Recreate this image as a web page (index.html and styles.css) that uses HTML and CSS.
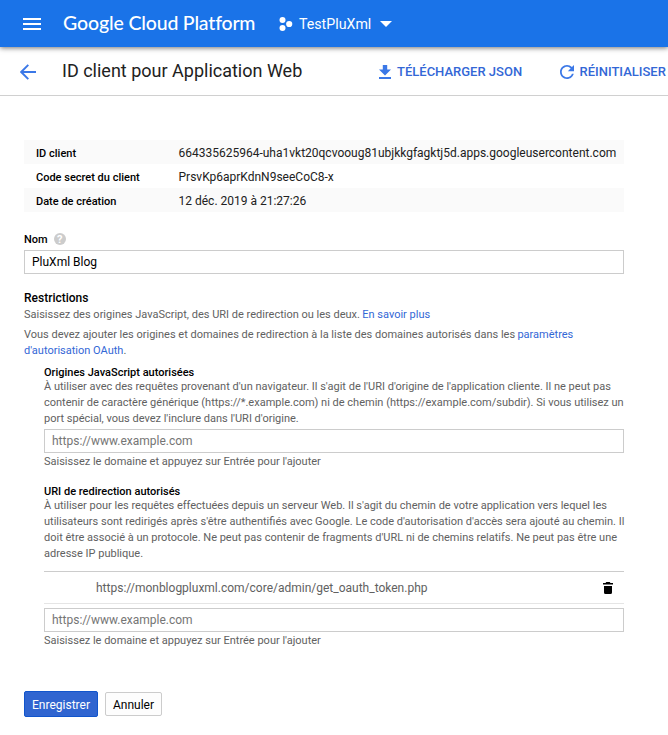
FILE: index.html
```html
<!DOCTYPE html>
<html lang="fr">
<head>
<meta charset="utf-8">
<title>ID client pour Application Web</title>
<link rel="stylesheet" href="styles.css">
</head>
<body>
<header class="topbar">
  <svg class="menu" width="18" height="12" viewBox="0 0 18 12"><path d="M0 0h18v2H0zM0 5h18v2H0zM0 10h18v2H0z" fill="#fff"/></svg>
  <span class="brand"><span class="brand-name">Google</span> Cloud Platform</span>
  <svg class="project-icon" width="14" height="14" viewBox="0 0 14 14" fill="#fff"><circle cx="3.5" cy="3" r="3"/><circle cx="3.5" cy="11" r="3"/><circle cx="10.2" cy="7" r="3.1"/></svg>
  <span class="project">TestPluXml</span>
  <svg class="caret" width="12" height="6" viewBox="0 0 12 6"><path d="M0 0h12L6 6z" fill="#fff"/></svg>
</header>
<div class="toolbar">
  <svg class="back" width="16" height="16" viewBox="0 0 16 16"><path d="M16 8H1.5M8.3 .8L1.2 8l7.1 7.2" fill="none" stroke="#3b78e7" stroke-width="1.9"/></svg>
  <h1 class="title">ID client pour Application Web</h1>
  <a class="action download"><svg width="12" height="14" viewBox="0 0 12 14" fill="#3b78e7"><path d="M3.8 0h4.4v4.6H12L6 10.4 0 4.6h3.8zM0 12h12v2H0z"/></svg>TÉLÉCHARGER JSON</a>
  <a class="action reset"><svg width="14" height="14" viewBox="4 4 16 16" fill="#3b78e7"><path d="M17.65 6.35C16.2 4.9 14.21 4 12 4c-4.42 0-7.99 3.58-7.99 8s3.57 8 7.99 8c3.73 0 6.84-2.55 7.73-6h-2.08c-.82 2.33-3.04 4-5.65 4-3.31 0-6-2.69-6-6s2.69-6 6-6c1.66 0 3.14.69 4.22 1.78L13 11h7V4z"/></svg>RÉINITIALISER</a>
</div>
<main class="content">
  <dl class="details">
    <div class="row"><dt>ID client</dt><dd>664335625964-uha1vkt20qcvooug81ubjkkgfagktj5d.apps.googleusercontent.com</dd></div>
    <div class="row"><dt>Code secret du client</dt><dd>PrsvKp6aprKdnN9seeCoC8-x</dd></div>
    <div class="row"><dt>Date de création</dt><dd>12 déc. 2019 à 21:27:26</dd></div>
  </dl>
  <label class="label" for="name">Nom <span class="help">?</span></label>
  <input id="name" class="field" type="text" value="PluXml Blog">
  <h2 class="section">Restrictions</h2>
  <p class="text">Saisissez des origines JavaScript, des URI de redirection ou les deux. <a>En savoir plus</a></p>
  <p class="text domains">Vous devez ajouter les origines et domaines de redirection à la liste des domaines autorisés dans les <a>paramètres<br>d'autorisation OAuth</a>.</p>
  <section class="group origins">
    <h3>Origines JavaScript autorisées</h3>
    <p class="text">À utiliser avec des requêtes provenant d'un navigateur. Il s'agit de l'URI d'origine de l'application cliente. Il ne peut pas<br>contenir de caractère générique (https://*.example.com) ni de chemin (https://example.com/subdir). Si vous utilisez un<br>port spécial, vous devez l'inclure dans l'URI d'origine.</p>
    <input class="field" type="text" placeholder="https://www.example.com">
    <p class="text">Saisissez le domaine et appuyez sur Entrée pour l'ajouter</p>
  </section>
  <section class="group redirects">
    <h3>URI de redirection autorisés</h3>
    <p class="text">À utiliser pour les requêtes effectuées depuis un serveur Web. Il s'agit du chemin de votre application vers lequel les<br>utilisateurs sont redirigés après s'être authentifiés avec Google. Le code d'autorisation d'accès sera ajouté au chemin. Il<br>doit être associé à un protocole. Ne peut pas contenir de fragments d'URL ni de chemins relatifs. Ne peut pas être une<br>adresse IP publique.</p>
    <div class="uri"><span>https://monblogpluxml.com/core/admin/get_oauth_token.php</span>
      <svg width="10" height="12" viewBox="0 0 10 12"><path d="M0 1h2.5l.8-1h3.4l.8 1H10v1.500H0zM1 4h8v6.500Q9 12 7.500 12h-5Q1 12 1 10.500z"/></svg>
    </div>
    <input class="field" type="text" placeholder="https://www.example.com">
    <p class="text">Saisissez le domaine et appuyez sur Entrée pour l'ajouter</p>
  </section>
  <div class="buttons">
    <button class="save">Enregistrer</button>
    <button class="cancel">Annuler</button>
  </div>
</main>
</body>
</html>
```
FILE: styles.css
```css
* { box-sizing: border-box; }
body {
  margin: 0;
  height: 735px;
  overflow: hidden;
  background: #fff;
  color: #000;
  font: 12px/16px Roboto, sans-serif;
}
h1, h2, h3, p, dl, dd { margin: 0; }
svg { display: block; flex: none; }
.topbar {
  display: flex;
  align-items: center;
  position: relative;
  height: 47px;
  padding-left: 23px;
  background: #1a73e8;
  color: #fff;
  box-shadow: 0 1px 5px rgba(0, 0, 0, .55);
}
.menu { margin-right: 22px; }
.brand {
  width: 216px;
  padding-bottom: 2px;
  font: 500 19.5px/24px Lato, sans-serif;
  letter-spacing: -.2px;
  white-space: nowrap;
}
.brand-name { letter-spacing: -.1px; }
.project { margin-left: 6px; width: 81px; padding-top: 1px; font-size: 14.2px; }
.toolbar {
  display: flex;
  align-items: center;
  height: 49px;
  padding-left: 20px;
  border-bottom: 1px solid #d0d0d0;
  white-space: nowrap;
}
.back { margin: 1px 26px 0 0; }
.title {
  width: 317px;
  flex: none;
  color: #212121;
  font-size: 18px;
  font-weight: 400;
  line-height: 24px;
}
.action {
  display: flex;
  align-items: center;
  flex: none;
  margin-top: 2px;
  color: #3367d6;
  font-size: 13px;
  font-weight: 500;
}
.download { width: 181px; gap: 6px; }
.reset { gap: 5.5px; }
.content { padding: 44px 0 0 24px; width: 624px; }
.row { display: flex; height: 24px; line-height: 26px; padding-left: 12px; }
.row:nth-child(odd) { background: #fafafa; }
.row dt { width: 142.5px; padding-top: 1px; font-size: 11px; font-weight: 500; }
.row dd { color: #212121; white-space: nowrap; }
.label {
  display: flex;
  align-items: center;
  gap: 6px;
  margin: 20px 0 2px;
  font-size: 11px;
  font-weight: 500;
}
.help {
  width: 12px;
  height: 12px;
  margin-top: -2px;
  border-radius: 50%;
  background: #ccc;
  color: #fff;
  font-size: 11px;
  font-weight: 700;
  line-height: 13px;
  text-align: center;
}
.field {
  display: block;
  width: 100%;
  height: 24px;
  padding: 0 7px;
  border: 1px solid #ccc;
  background: #fff;
  color: #000;
  font: 12px Roboto, sans-serif;
}
.field::placeholder { color: #757575; opacity: 1; }
.section { margin: 16px 0 1px; font-size: 12px; font-weight: 500; }
.text { color: #616161; font-size: 11px; line-height: 16px; white-space: nowrap; }
.text a { margin-left: -.4px; color: #3367d6; }
.domains { margin-top: 4px; }
.group { margin-left: 20px; }
.group h3 { margin-bottom: -1px; font-size: 11px; font-weight: 500; line-height: 14px; }
.group .field { margin: 2px 0 1px; }
.origins { margin-top: 7px; }
.redirects { margin-top: 15px; }
.uri {
  display: flex;
  align-items: center;
  justify-content: space-between;
  height: 33px;
  margin-top: 9px;
  padding: 0 11px 0 52px;
  border-top: 1px solid #ccc;
  border-bottom: 1px solid #e5e5e5;
  color: #616161;
}
.group .uri + .field { margin-top: 4px; }
.buttons { display: flex; align-items: center; gap: 7px; margin-top: 42px; }
.buttons button { padding: 2px 0 0; border-radius: 2px; font: 12px Roboto, sans-serif; }
.save { width: 74px; height: 26px; border: 1px solid #1155cc; background: #3065d0; color: #fff; }
.cancel { width: 57px; height: 24px; border: 1px solid #ccc; background: #fdfdfd; color: #000; }
```
